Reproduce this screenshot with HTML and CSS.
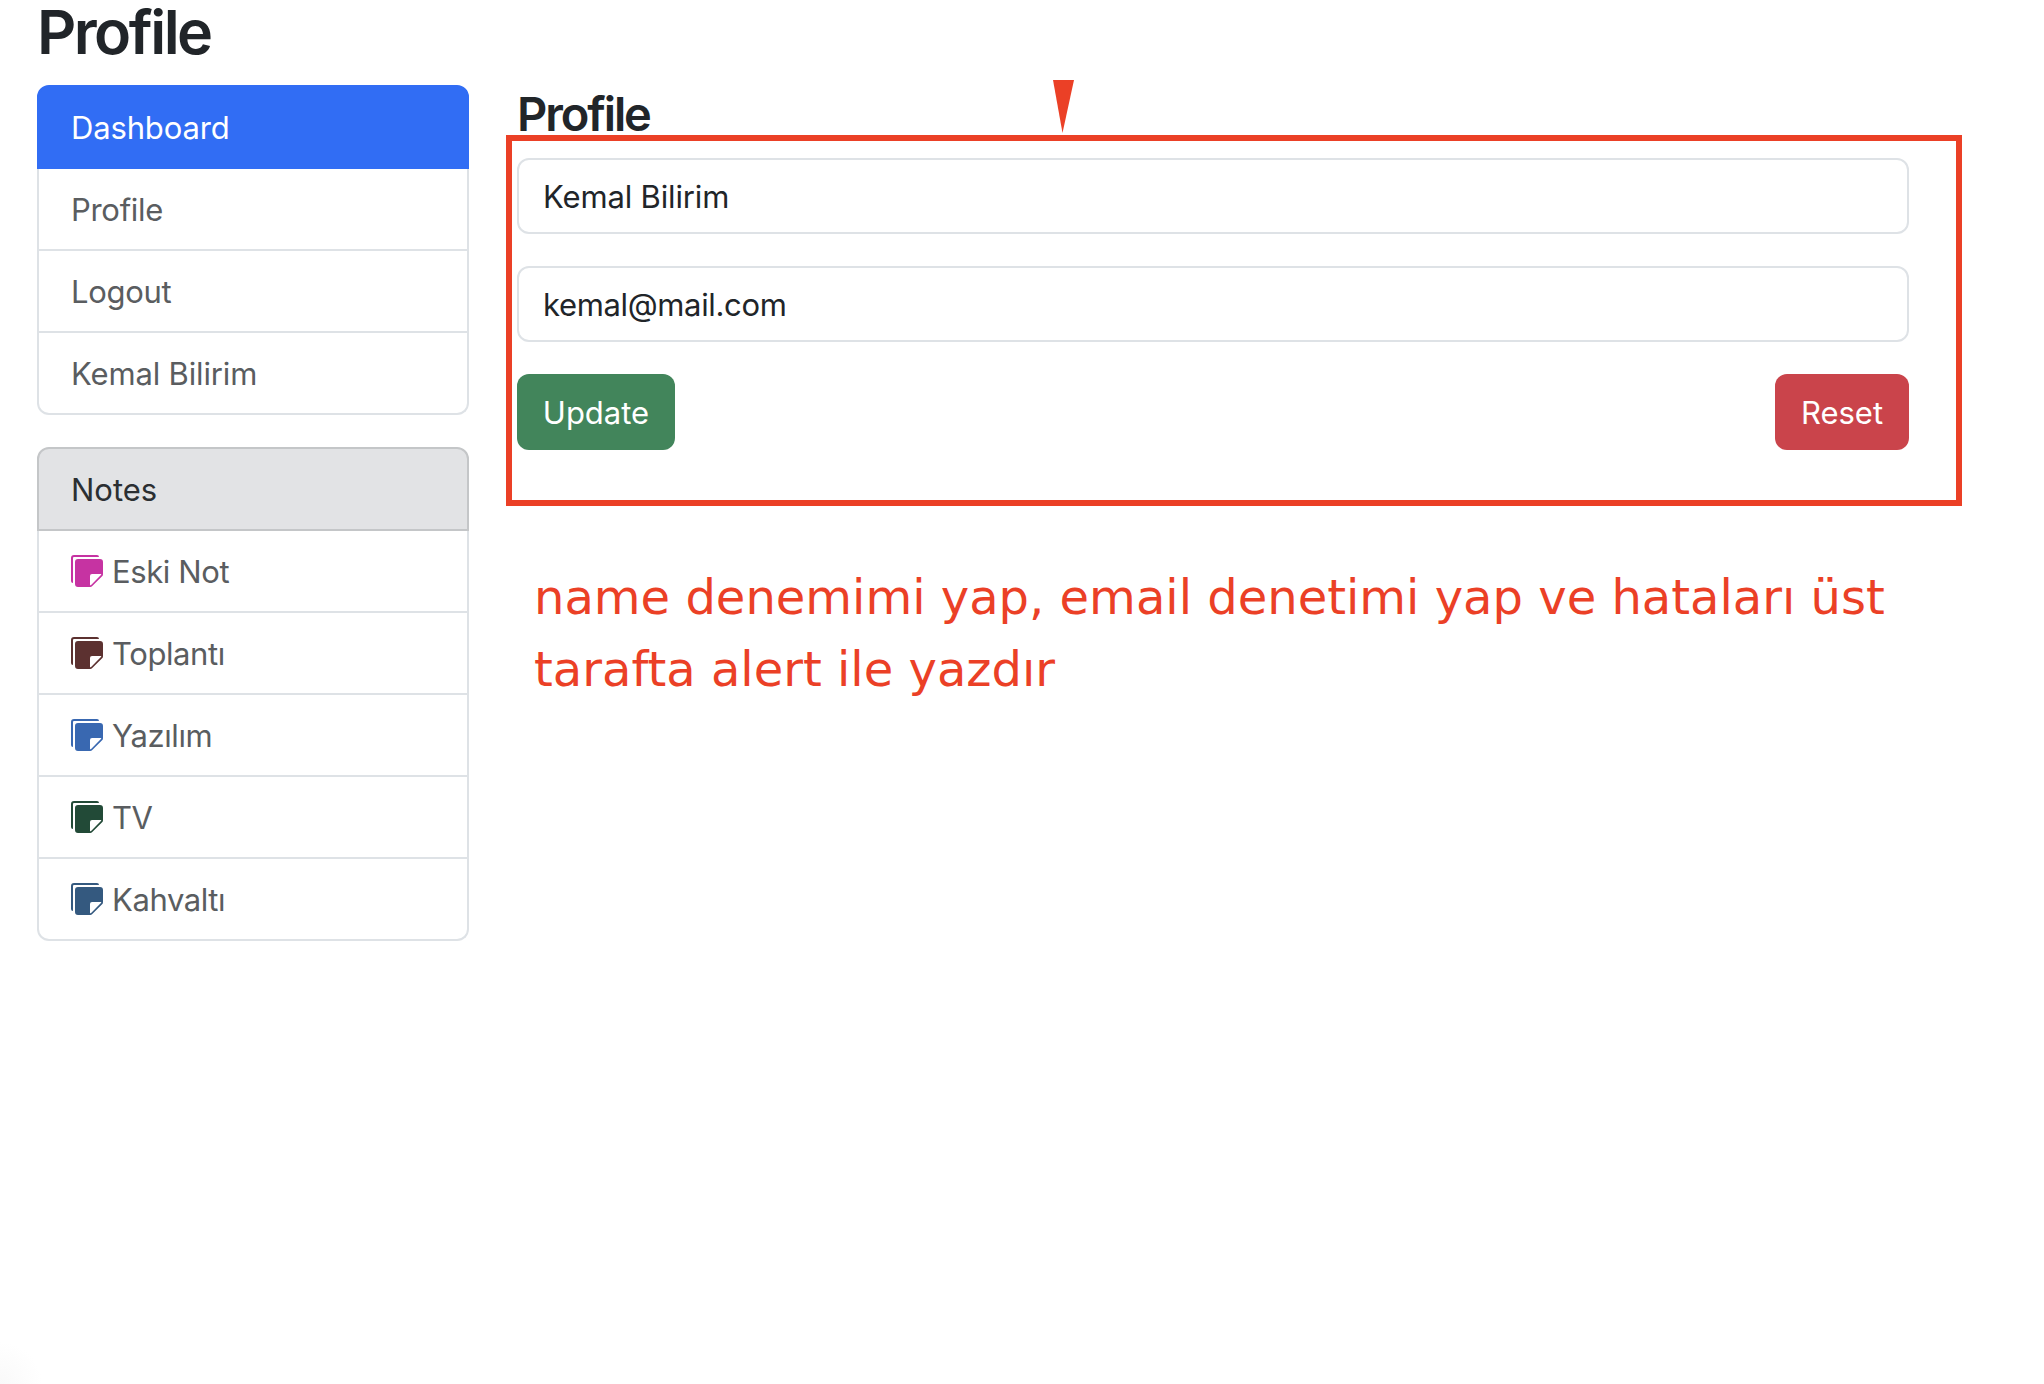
FILE: index.html
```html
<!DOCTYPE html>
<html lang="tr">
<head>
  <meta charset="utf-8">
  <title>Profile</title>
  <link rel="stylesheet" href="styles.css">
</head>
<body>
  <svg class="sprite" aria-hidden="true">
    <symbol id="stickies" viewBox="0 0 16 16">
      <path d="M0 1.5V13a1 1 0 0 0 1 1V1.5a.5.5 0 0 1 .5-.5H14a1 1 0 0 0-1-1H1.5A1.5 1.5 0 0 0 0 1.5z"/>
      <path d="M3.5 2A1.5 1.5 0 0 0 2 3.5v11A1.5 1.5 0 0 0 3.5 16h6.086a1.5 1.5 0 0 0 1.06-.44l4.915-4.914A1.5 1.5 0 0 0 16 9.586V3.5A1.5 1.5 0 0 0 14.5 2h-11zm6 8.5a1 1 0 0 1 1-1h4.396a.25.25 0 0 1 .177.427l-5.146 5.146a.25.25 0 0 1-.427-.177V10.5z"/>
    </symbol>
  </svg>

  <div class="page">
    <h1 class="page-title">Profile</h1>
    <div class="columns">
      <aside class="sidebar">
        <nav class="list">
          <a class="item item-active">Dashboard</a>
          <a class="item item-profile">Profile</a>
          <a class="item item-profile">Logout</a>
          <a class="item">Kemal Bilirim</a>
        </nav>
        <nav class="list list-notes">
          <a class="item item-header">Notes</a>
          <a class="item"><svg class="icon pink"><use href="#stickies"/></svg>Eski Not</a>
          <a class="item"><svg class="icon maroon"><use href="#stickies"/></svg>Toplantı</a>
          <a class="item"><svg class="icon blue"><use href="#stickies"/></svg>Yazılım</a>
          <a class="item"><svg class="icon green"><use href="#stickies"/></svg>TV</a>
          <a class="item"><svg class="icon steel"><use href="#stickies"/></svg>Kahvaltı</a>
        </nav>
      </aside>

      <main class="content">
        <h3 class="section-title">Profile</h3>
        <form class="form">
          <input class="field" type="text" value="Kemal Bilirim">
          <input class="field field-email" type="text" value="kemal@mail.com">
          <div class="actions">
            <button class="btn btn-update" type="button">Update</button>
            <button class="btn btn-reset" type="button">Reset</button>
          </div>
          <svg class="pointer" viewBox="0 0 21 53"><path d="M0 0H21L9.5 53Z"/></svg>
        </form>
        <p class="remark">name denemimi yap, email denetimi yap ve hataları üst<br>tarafta alert ile yazdır</p>
      </main>
    </div>
  </div>
</body>
</html>
```
FILE: styles.css
```css
* {
  box-sizing: border-box;
}

body {
  margin: 0;
  min-height: 1384px;
  background: radial-gradient(circle at 0 100%, #f9f9f9, #fff 42px) #fff;
  color: #212529;
  font: 430 31px/48px Inter, "Liberation Sans", sans-serif;
  letter-spacing: -0.15px;
}

.sprite {
  position: absolute;
  width: 0;
  height: 0;
}

.page {
  padding-left: 37px;
}

.page-title {
  margin: 0 0 21px;
  font-size: 61px;
  font-weight: 590;
  line-height: 64px;
  letter-spacing: -2.55px;
}

.columns {
  display: grid;
  grid-template-columns: 432px 1392px;
  column-gap: 48px;
  align-items: start;
}

.sidebar {
  display: flex;
  flex-direction: column;
  gap: 32px;
}

.list {
  display: flex;
  flex-direction: column;
}

.item {
  display: flex;
  align-items: center;
  gap: 9px;
  padding: 17px 32px 15px;
  border: 2px solid #dee2e6;
  border-top: 0;
  color: #5a5d60;
}

.item:first-child {
  border-top: 2px solid;
  border-radius: 12px 12px 0 0;
}

.item:last-child {
  border-radius: 0 0 12px 12px;
}

.item-profile {
  letter-spacing: -0.3px;
}

.item.item-active {
  background: #316df4;
  border-color: #316df4;
  color: #fff;
}

.list-notes .item {
  letter-spacing: -0.4px;
}

.list-notes .item-header {
  background: #e2e3e5;
  border-color: #c4c6c8;
  color: #2b2f32;
  letter-spacing: 0;
}

.icon {
  width: 32px;
  height: 32px;
  margin-top: -2px;
  fill: currentColor;
}

.pink { color: #c633a2; }
.maroon { color: #5c3130; }
.blue { color: #3968b1; }
.green { color: #224a37; }
.steel { color: #34597f; }

.section-title {
  margin: 0 0 15px;
  font-size: 47px;
  font-weight: 590;
  line-height: 58px;
  letter-spacing: -2.1px;
}

.form {
  position: relative;
  display: flex;
  flex-direction: column;
  gap: 32px;
}

/* red frame drawn over the form */
.form::after {
  content: "";
  position: absolute;
  inset: -23px -53px -56px -11px;
  border: 6px solid #eb4026;
  pointer-events: none;
}

.pointer {
  position: absolute;
  top: -78px;
  left: 536px;
  width: 21px;
  height: 53px;
  fill: #eb4026;
}

.field {
  width: 100%;
  height: 76px;
  padding: 12px 24px;
  border: 2px solid #dee2e6;
  border-radius: 12px;
  background: #fff;
  color: inherit;
  font: inherit;
  letter-spacing: -0.15px;
}

.field-email {
  letter-spacing: -0.35px;
}

.actions {
  display: flex;
  justify-content: space-between;
}

.btn {
  height: 76px;
  padding: 2px 0 0;
  border: 0;
  border-radius: 12px;
  color: #fff;
  font: inherit;
}

.btn-update {
  width: 158px;
  background: #42855b;
}

.btn-reset {
  width: 134px;
  background: #ca444b;
}

.remark {
  margin: 111px 0 0 17px;
  color: #eb4026;
  font: 48px/72px "DejaVu Sans", Verdana, sans-serif;
  letter-spacing: 0;
  white-space: nowrap;
}
```
